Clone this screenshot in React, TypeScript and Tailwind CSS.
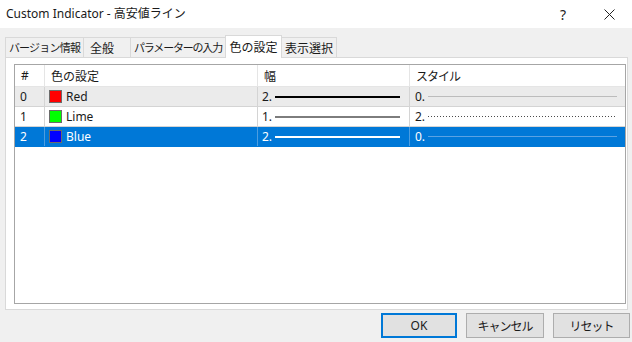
const rows = [
  { id: 0, name: "Red", swatch: "bg-[#ff0000]", width: "2.", style: "0." },
  { id: 1, name: "Lime", swatch: "bg-[#00ff00]", width: "1.", style: "2." },
  { id: 2, name: "Blue", swatch: "bg-[#0000ff]", width: "2.", style: "0." },
];

const tabs = [
  { label: "バージョン情報", cls: "w-[79px] text-[11px] tracking-[-0.8px]" },
  { label: "全般", cls: "w-[48px] text-[12px] justify-start pl-[6px]" },
  { label: "パラメーターの入力", cls: "w-[96px] text-[11px] tracking-[-1.2px]" },
  { label: "色の設定", cls: "w-[57px] text-[12px]", active: true },
  { label: "表示選択", cls: "w-[56px] text-[12px]" },
];

function WidthLine({ id }: { id: number }) {
  if (id === 0) return <div className="flex-1 h-[2px] bg-black" />;
  if (id === 1) return <div className="flex-1 h-[2px] bg-[#7d7d7d]" />;
  return <div className="flex-1 h-[2px] bg-white" />;
}

function StyleLine({ id }: { id: number }) {
  if (id === 0) return <div className="flex-1 h-px bg-[#bcbcbc]" />;
  if (id === 1)
    return <div className="flex-1 h-px bg-[repeating-linear-gradient(90deg,#4a4a4a_0px,#4a4a4a_1px,transparent_1px,transparent_3px)]" />;
  return <div className="flex-1 h-px bg-[#5aa2e3]" />;
}

export default function App() {
  return (
    <div className="w-[632px] h-[342px] bg-[#f0f0f0] flex flex-col font-['Noto_Sans','Noto_Sans_CJK_JP',sans-serif] text-[#1a1a1a] overflow-hidden">
      {/* title bar */}
      <div className="h-[28px] bg-white flex items-center justify-between pl-[6px]">
        <span className="text-[12px]">Custom Indicator - 高安値ライン</span>
        <div className="flex items-center">
          <span className="w-[46px] text-center text-[14px] text-[#222]">?</span>
          <span className="w-[46px] flex justify-center">
            <svg width="11" height="11" viewBox="0 0 11 11">
              <path d="M0.5 0.5L10.5 10.5M10.5 0.5L0.5 10.5" stroke="#222" strokeWidth="1" />
            </svg>
          </span>
        </div>
      </div>

      {/* tab strip */}
      <div className="h-[29px] flex items-end pl-[5px]">
        {tabs.map((t) =>
          t.active ? (
            <div
              key={t.label}
              className={`${t.cls} relative z-10 -mb-px -mr-px h-[23px] bg-white border border-b-0 border-[#d9d9d9] flex items-center justify-center font-['Noto_Sans_CJK_JP',sans-serif]`}
            >
              {t.label}
            </div>
          ) : (
            <div
              key={t.label}
              className={`${t.cls} h-[20px] -mr-px bg-[#f0f0f0] border border-b-0 border-[#d9d9d9] flex items-center justify-center font-['Noto_Sans_CJK_JP',sans-serif]`}
            >
              {t.label}
            </div>
          )
        )}
      </div>

      {/* panel */}
      <div className="ml-[5px] mr-[4px] h-[253px] bg-white border border-[#d9d9d9] pl-[8px] pr-[1px] pt-[6px] pb-[5px] flex">
        <div className="flex-1 border border-[#a6a6a6] bg-white flex flex-col text-[12px]">
          <div className="grid grid-cols-[30px_213px_152px_1fr] h-[22px] border-b border-[#e5e5e5]">
            <div className="border-r border-[#e5e5e5] pl-[6px] flex items-center">#</div>
            <div className="border-r border-[#e5e5e5] pl-[6px] flex items-center font-['Noto_Sans_CJK_JP',sans-serif]">色の設定</div>
            <div className="border-r border-[#e5e5e5] pl-[6px] flex items-center font-['Noto_Sans_CJK_JP',sans-serif]">幅</div>
            <div className="pl-[6px] flex items-center font-['Noto_Sans_CJK_JP',sans-serif] tracking-[-1px]">スタイル</div>
          </div>
          {rows.map((r) => {
            const sel = r.id === 2;
            const rowCls =
              r.id === 0
                ? "bg-[#ebebeb] text-[#1a1a1a] border-[#d4d4d4]"
                : r.id === 1
                ? "bg-white text-[#1a1a1a] border-[#d4d4d4]"
                : "bg-[#0078d7] text-white border-[#0078d7]";
            const sepCls = sel ? "border-r border-[#4d9de0]" : "border-r border-[#d4d4d4]";
            return (
              <div key={r.id} className={`grid grid-cols-[30px_213px_152px_1fr] h-[20px] border-b ${rowCls}`}>
                <div className={`${sepCls} pl-[5px] flex items-center`}>{r.id}</div>
                <div className={`${sepCls} pl-[4px] flex items-center gap-[4px]`}>
                  <span className={`w-[13px] h-[13px] border border-[#6b6b6b] ${r.swatch}`} />
                  <span>{r.name}</span>
                </div>
                <div className={`${sepCls} pl-[4px] pr-[9px] flex items-center gap-[3px]`}>
                  <span>{r.width}</span>
                  <WidthLine id={r.id} />
                </div>
                <div className="pl-[5px] pr-[8px] flex items-center gap-[3px]">
                  <span>{r.style}</span>
                  <StyleLine id={r.id} />
                </div>
              </div>
            );
          })}
        </div>
      </div>

      {/* buttons */}
      <div className="flex justify-end gap-[9px] pr-[2px] pt-[3px] text-[12px] font-['Noto_Sans_CJK_JP',sans-serif]">
        <button className="w-[76px] h-[25px] bg-[#e1e1e1] border-2 border-[#0078d7] flex items-center justify-center font-['Noto_Sans',sans-serif]">
          OK
        </button>
        <button className="w-[78px] h-[25px] bg-[#e1e1e1] border border-[#adadad] flex items-center justify-center tracking-[-1px]">
          キャンセル
        </button>
        <button className="w-[77px] h-[25px] bg-[#e1e1e1] border border-[#adadad] flex items-center justify-center tracking-[-1px]">
          リセット
        </button>
      </div>
    </div>
  );
}
